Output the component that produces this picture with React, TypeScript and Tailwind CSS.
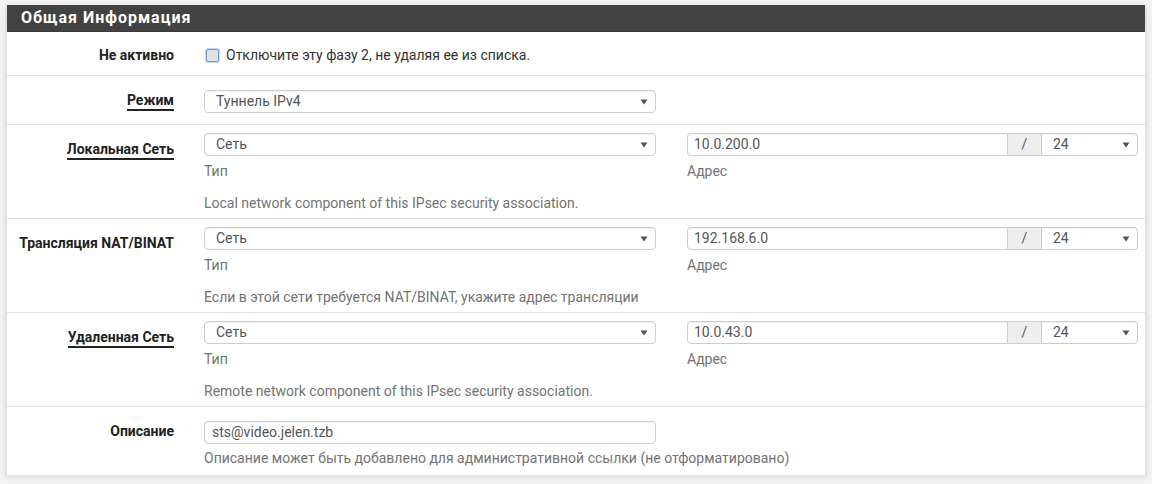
import React from "react";

const font = { fontFamily: "Roboto, 'Liberation Sans', sans-serif" };

function Arrow() {
  return (
    <svg width="8" height="6" viewBox="0 0 8 6" className="shrink-0">
      <path d="M0.5 0.5 L7.5 0.5 L4 5.5 Z" fill="#555" />
    </svg>
  );
}

function Select({ value, className }: { value: string; className: string }) {
  return (
    <div
      className={
        "h-[23px] border border-[#ccc] bg-white flex items-center justify-between pl-[11px] pr-[7px] text-[14px] text-[#555] shadow-[inset_0_1px_1px_rgba(0,0,0,0.05)] " +
        className
      }
    >
      <span>{value}</span>
      <Arrow />
    </div>
  );
}

function Label({ text, underline }: { text: string; underline?: boolean }) {
  return (
    <div className="w-[182px] shrink-0 text-right pr-[15px] text-[14px] leading-[20px] font-bold text-[#222]">
      {underline ? (
        <span className="inline-block border-b-2 border-[#222] leading-[17px]">{text}</span>
      ) : (
        text
      )}
    </div>
  );
}

function NetworkRow({
  label,
  underline,
  address,
  help,
}: {
  label: string;
  underline?: boolean;
  address: string;
  help: string;
}) {
  return (
    <div className="h-[94px] border-t border-[#e3e3e3] flex pt-[8px]">
      <div className="pt-[6px]">
        <Label text={label} underline={underline} />
      </div>
      <div className="w-[452px] ml-[15px] shrink-0">
        <Select value="Сеть" className="rounded-[4px]" />
        <div className="text-[14px] text-[#737373] mt-[5px] leading-[20px]">Тип</div>
        <div className="text-[14px] text-[#737373] mt-[12px] leading-[20px]">{help}</div>
      </div>
      <div className="w-[451px] ml-[31px] shrink-0">
        <div className="flex h-[23px]">
          <div className="flex-1 border border-[#ccc] rounded-l-[4px] bg-white flex items-center pl-[6px] text-[14px] text-[#555] shadow-[inset_0_1px_1px_rgba(0,0,0,0.05)]">
            {address}
          </div>
          <div className="w-[33px] border-y border-[#ccc] bg-[#eee] flex items-center justify-center text-[14px] text-[#555]">
            /
          </div>
          <Select value="24" className="w-[97px] rounded-r-[4px]" />
        </div>
        <div className="text-[14px] text-[#737373] mt-[5px] leading-[20px]">Адрес</div>
      </div>
    </div>
  );
}

export default function App() {
  return (
    <div className="w-[1152px] h-[484px] bg-[#f3f3f3] pt-[5px] px-[6px] overflow-hidden" style={font}>
      <div className="bg-white border-x border-[#e0e0e0] shadow-[0_2px_6px_rgba(0,0,0,0.12)]">
        <div className="h-[27px] bg-[#424242] flex items-center pl-[14px] text-[16px] tracking-[1px] font-bold text-white border-b border-[#3a3a3a]">
          Общая Информация
        </div>

        <div className="h-[43px] flex items-start pt-[13px]">
          <Label text="Не активно" />
          <div className="ml-[17px] flex items-center gap-[7px] text-[14px] leading-[20px] text-[#333]">
            <span className="w-[13px] h-[13px] rounded-[2px] border border-[#6f93d8] bg-[#e2e2e2] shadow-[0_0_1px_1px_rgba(120,160,230,0.45)]" />
            <span>Отключите эту фазу 2, не удаляя ее из списка.</span>
          </div>
        </div>

        <div className="h-[49px] border-t border-[#e3e3e3] flex items-start pt-[14px]">
          <Label text="Режим" underline />
          <Select value="Туннель IPv4" className="w-[452px] ml-[15px] rounded-[4px]" />
        </div>

        <NetworkRow
          label="Локальная Сеть"
          underline
          address="10.0.200.0"
          help="Local network component of this IPsec security association."
        />
        <NetworkRow
          label="Трансляция NAT/BINAT"
          address="192.168.6.0"
          help="Если в этой сети требуется NAT/BINAT, укажите адрес трансляции"
        />
        <NetworkRow
          label="Удаленная Сеть"
          underline
          address="10.0.43.0"
          help="Remote network component of this IPsec security association."
        />

        <div className="h-[69px] border-t border-[#e3e3e3] flex pt-[14px]">
          <Label text="Описание" />
          <div className="w-[452px] ml-[15px] shrink-0">
            <div className="h-[23px] border border-[#ccc] rounded-[4px] bg-white flex items-center pl-[7px] text-[14px] text-[#555] shadow-[inset_0_1px_1px_rgba(0,0,0,0.05)]">
              sts@video.jelen.tzb
            </div>
            <div className="text-[14px] text-[#737373] mt-[4px] leading-[20px] whitespace-nowrap">
              Описание может быть добавлено для административной ссылки (не отформатировано)
            </div>
          </div>
        </div>
      </div>
    </div>
  );
}
